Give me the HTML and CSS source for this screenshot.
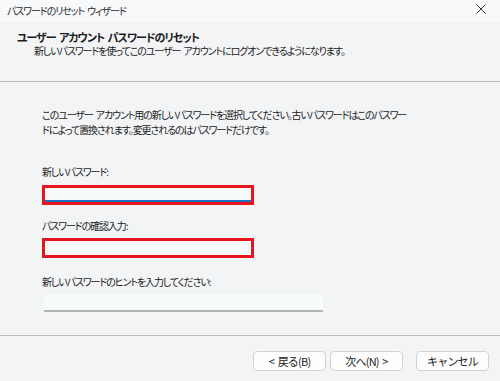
FILE: index.html
```html
<!DOCTYPE html>
<html lang="ja">
<head>
    <meta charset="UTF-8">
    <title>パスワードのリセット ウィザード</title>
    <link rel="stylesheet" href="styles.css">
</head>
<body>
<div class="wizard">
    <div class="titlebar">
        <span class="titlebar-text">パスワードのリセット ウィザード</span>
        <svg class="close" width="10" height="10" viewBox="0 0 10 10">
            <path d="M0.5 0.5 L9.5 9.5 M9.5 0.5 L0.5 9.5" stroke="#333" stroke-width="1" fill="none"/>
        </svg>
    </div>

    <div class="header">
        <div class="header-title">ユーザー アカウント パスワードのリセット</div>
        <div class="header-sub">新しいパスワードを使ってこのユーザー アカウントにログオンできるようになります。</div>
    </div>

    <div class="content">
        <p class="desc">このユーザー アカウント用の新しいパスワードを選択してください。古いパスワードはこのパスワー<br>ドによって置換されます。変更されるのはパスワードだけです。</p>

        <div class="label first">新しいパスワード:</div>
        <div class="mark">
            <div class="input focused"></div>
        </div>

        <div class="label second">パスワードの確認入力:</div>
        <div class="mark">
            <div class="input"></div>
        </div>

        <div class="label third">新しいパスワードのヒントを入力してください:</div>
        <div class="hint-input"></div>
    </div>

    <div class="footer">
        <button class="btn">&lt; 戻る(B)</button>
        <button class="btn">次へ(N) &gt;</button>
        <button class="btn cancel">キャンセル</button>
    </div>
</div>
</body>
</html>
```

FILE: styles.css
```css
* {
    box-sizing: border-box;
}

body {
    margin: 0;
    padding: 0;
    font-family: "Noto Sans CJK JP", "Noto Sans", sans-serif;
    font-feature-settings: "palt";
    font-size: 10px;
    letter-spacing: -1.1px;
    word-spacing: 2px;
    color: #1b1b1b;
    background: #f2f4f6;
}

.wizard {
    width: 500px;
    height: 381px;
    display: flex;
    flex-direction: column;
}

.titlebar {
    height: 22px;
    background: #f8f9fa;
    display: flex;
    align-items: center;
    justify-content: space-between;
    padding: 0 14px 0 7px;
}

.titlebar-text {
    line-height: 14px;
    margin-top: -1px;
    color: #2a2a2a;
}

.close {
    margin-top: -4px;
}

.header {
    height: 60px;
    background: #f2f4f6;
    border-bottom: 1px solid #bdbdbd;
    padding: 9px 0 0 17px;
}

.header-title {
    font-size: 11px;
    font-weight: bold;
    letter-spacing: -1px;
    line-height: 13px;
}

.header-sub {
    line-height: 13px;
    padding-left: 17px;
}

.content {
    flex: 1;
    padding: 25px 0 0 42px;
    background: #f2f4f6;
}

.desc {
    margin: 0;
    line-height: 15px;
}

.label {
    line-height: 15px;
}

.label.first {
    margin-top: 27px;
    margin-bottom: 6px;
}

.label.second {
    margin-top: 13px;
    margin-bottom: 5px;
}

.label.third {
    margin-top: 16px;
    margin-bottom: 6px;
}

.mark {
    width: 212px;
    height: 20px;
    border: 3px solid #e8141e;
}

.input {
    height: 100%;
    background: #f7fafb;
}

.input.focused {
    border-bottom: 2px solid #1c6fc4;
}

.hint-input {
    width: 279px;
    height: 17px;
    margin-left: 2px;
    background: #f8fbfb;
    border-bottom: 2px solid #b3b3b3;
}

.footer {
    height: 46px;
    border-top: 1px solid #bdbdbd;
    background: #f2f4f6;
    display: flex;
    justify-content: flex-end;
    align-items: flex-start;
    padding: 15px 11px 0 0;
}

.btn {
    width: 73px;
    height: 20px;
    padding: 0;
    margin-left: 4px;
    font-family: inherit;
    font-size: 11px;
    letter-spacing: -0.8px;
    word-spacing: 2px;
    color: #1b1b1b;
    background: #fdfdfd;
    border: 1px solid #d3d3d3;
    border-radius: 4px;
}

.btn.cancel {
    margin-left: 13px;
}
```
